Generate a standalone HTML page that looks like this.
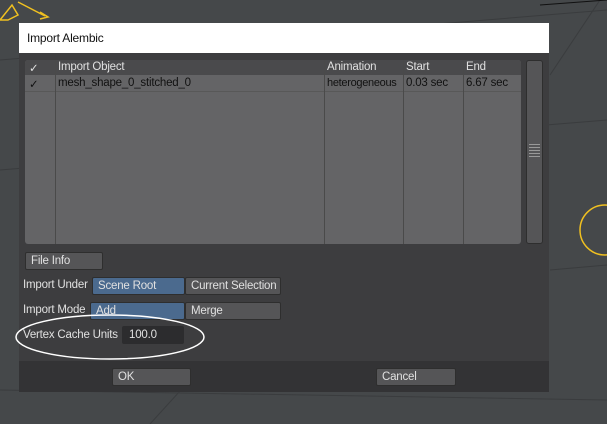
<html><head><style>
body{margin:0;width:607px;height:424px;background:#45484a;position:relative;overflow:hidden;font-family:"Liberation Sans",sans-serif;font-size:11.5px;letter-spacing:-0.2px;white-space:nowrap;color:#e0e0e0}
.a{position:absolute}
.btn{position:absolute;background:#555557;border:1px solid #2e2e2e;border-radius:2px;box-sizing:border-box;padding-left:5px;line-height:16px;overflow:hidden}
.blue{background:#4b6a8e}
.col{position:absolute;top:0;height:184px;border-left:1px solid #4a4a4a}
</style></head><body>
<svg class="a" style="left:0;top:0" width="607" height="424">
<g stroke="#3a3c3e" stroke-width="1" fill="none">
<line x1="0" y1="60" x2="607" y2="10"/><line x1="0" y1="170" x2="607" y2="120"/>
<line x1="0" y1="390" x2="607" y2="400"/><line x1="150" y1="424" x2="190" y2="380"/>
<line x1="550" y1="75" x2="600" y2="0"/><line x1="550" y1="270" x2="607" y2="265"/>
</g>
<line x1="540" y1="5" x2="607" y2="0" stroke="#111" />
<g stroke="#f0c020" stroke-width="1.5" fill="none">
<path d="M0 20 L12 5 L18 15 L8 20 Z M18 2 L45 16 M40 12 L48 17 L40 19"/>
<circle cx="605" cy="230" r="25"/>
</g>
</svg>
<div class="a" style="left:19px;top:23px;width:530px;height:30px;background:#fff;color:#111;font-size:12px;line-height:30px;padding-left:8px;box-sizing:border-box">Import Alembic</div>
<div class="a" style="left:19px;top:53px;width:530px;height:339px;background:#3d3d3f"></div>
<div class="a" style="left:19px;top:361px;width:530px;height:31px;background:#333335"></div>
<div class="a" style="left:25px;top:60px;width:496px;height:184px;background:#646466;border-radius:3px;overflow:hidden">
<div class="a" style="left:0;top:0;width:496px;height:15px;background:#4a4a4c;line-height:15px"></div>
<div class="a" style="left:0;top:15px;width:496px;height:16px;border-bottom:1px solid #585858"></div>
<div class="col" style="left:30px"></div><div class="col" style="left:299px"></div><div class="col" style="left:378px"></div><div class="col" style="left:438px"></div>
<div class="a" style="left:4px;top:1px">✓</div><div class="a" style="left:33px;top:1px">Import Object</div><div class="a" style="left:302px;top:1px">Animation</div><div class="a" style="left:381px;top:1px">Start</div><div class="a" style="left:441px;top:1px">End</div>
<div class="a" style="left:4px;top:17px;color:#111">✓</div><div class="a" style="left:33px;top:17px;color:#111">mesh_shape_0_stitched_0</div><div class="a" style="left:302px;top:17px;color:#111;font-size:11px;letter-spacing:-0.3px">heterogeneous</div><div class="a" style="left:381px;top:17px;color:#111">0.03 sec</div><div class="a" style="left:441px;top:17px;color:#111">6.67 sec</div>
</div>
<div class="a" style="left:526px;top:60px;width:17px;height:184px;background:#555557;border:1px solid #2e2e2e;border-radius:3px;box-sizing:border-box"></div>
<div class="a" style="left:529px;top:144px;width:11px;height:14px;background:repeating-linear-gradient(#999 0 1px,transparent 1px 3px)"></div>
<div class="btn" style="left:25px;top:252px;width:78px;height:18px">File Info</div>
<div class="a" style="left:23px;top:279px">Import Under</div>
<div class="btn blue" style="left:92px;top:277px;width:93px;height:18px">Scene Root</div>
<div class="btn" style="left:185px;top:277px;width:96px;height:18px">Current Selection</div>
<div class="a" style="left:23px;top:304px">Import Mode</div>
<div class="btn blue" style="left:90px;top:302px;width:95px;height:18px">Add</div>
<div class="btn" style="left:185px;top:302px;width:96px;height:18px">Merge</div>
<div class="a" style="left:23px;top:329px">Vertex Cache Units</div>
<div class="a" style="left:122px;top:326px;width:62px;height:18px;background:#2c2c2e;border-radius:2px;padding-left:7px;line-height:18px;box-sizing:border-box">100.0</div>
<svg class="a" style="left:0;top:0" width="607" height="424"><ellipse cx="110" cy="337" rx="94" ry="22" fill="none" stroke="#fff" stroke-width="1.5"/></svg>
<div class="btn" style="left:112px;top:368px;width:79px;height:18px">OK</div>
<div class="btn" style="left:376px;top:368px;width:80px;height:18px">Cancel</div>
</body></html>
